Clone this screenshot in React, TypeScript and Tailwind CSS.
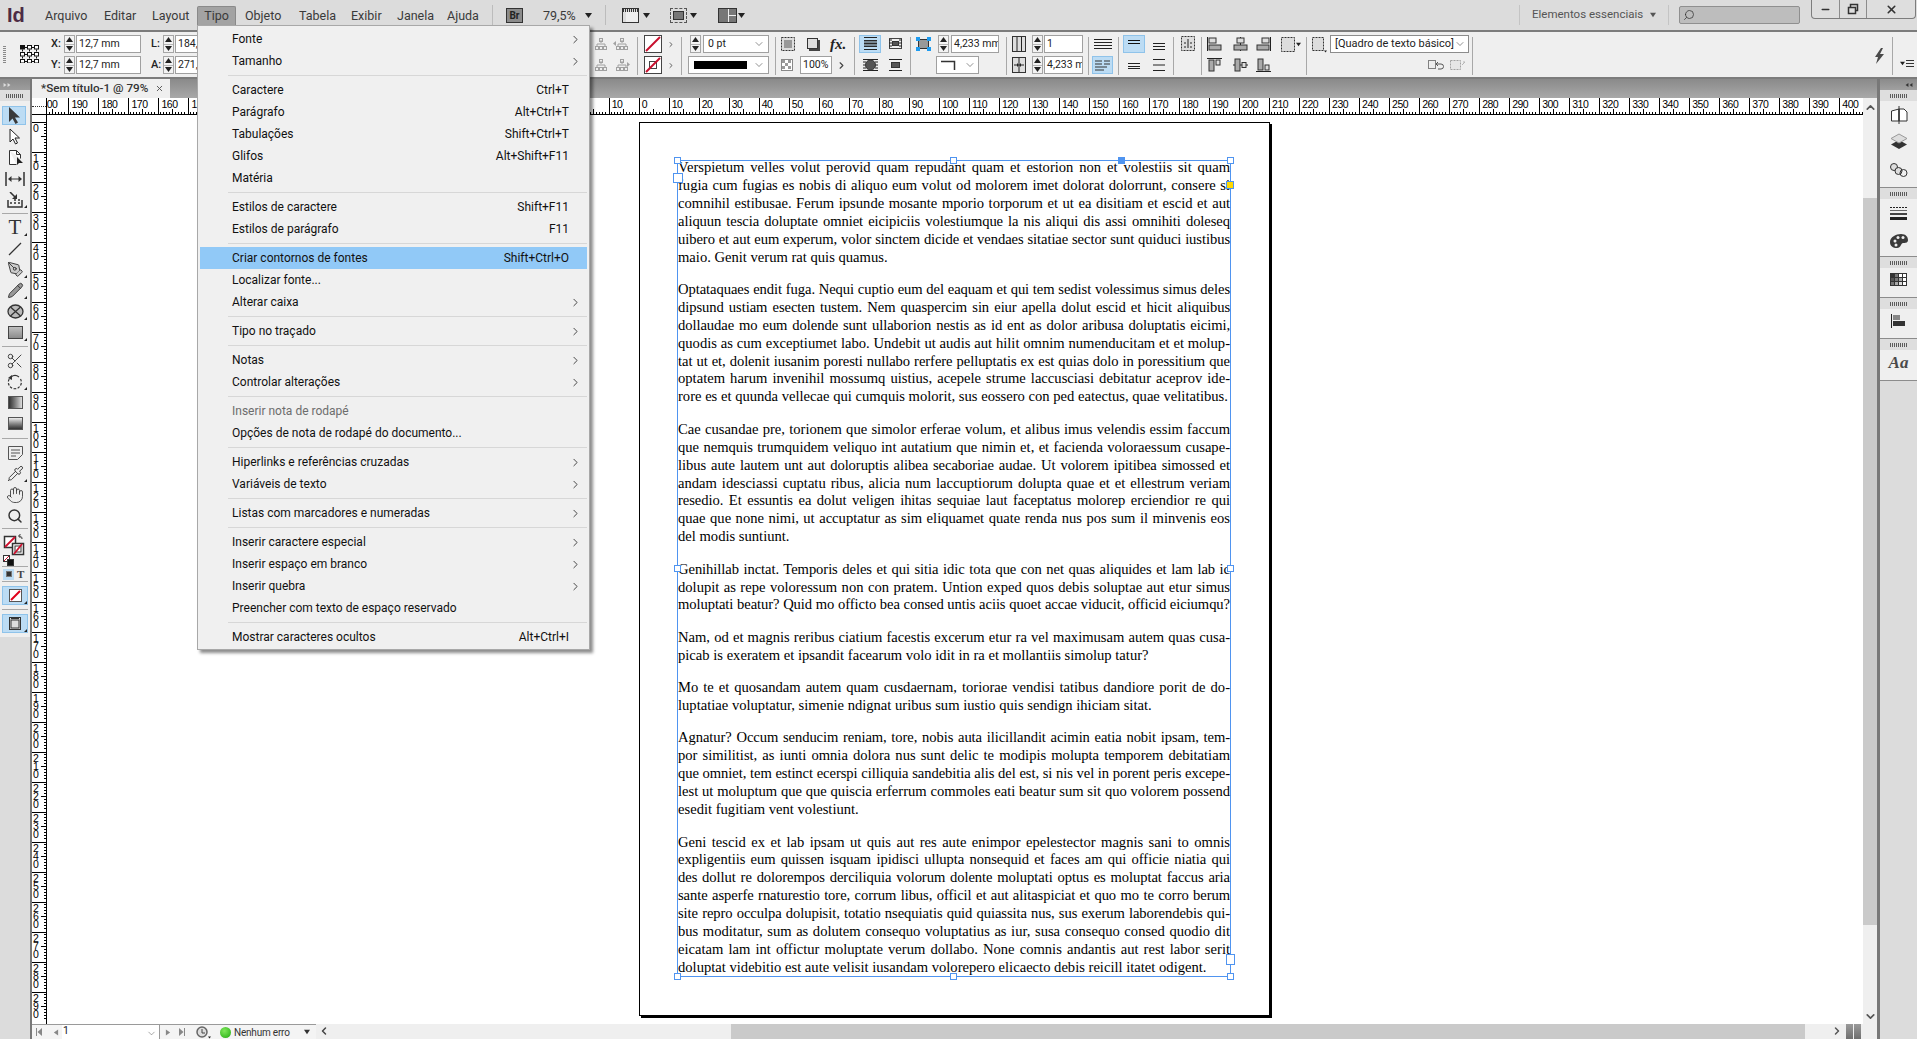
import React from "react";
import { ChevronDown, ChevronRight, Scissors, Hand, Search, PenTool, Pencil, Pipette, Minus, X } from "lucide-react";

const MENU: (null | { t: string; s?: string; a?: boolean; d?: boolean; h?: boolean })[] = [
  { t: "Fonte", a: true },
  { t: "Tamanho", a: true },
  null,
  { t: "Caractere", s: "Ctrl+T" },
  { t: "Parágrafo", s: "Alt+Ctrl+T" },
  { t: "Tabulações", s: "Shift+Ctrl+T" },
  { t: "Glifos", s: "Alt+Shift+F11" },
  { t: "Matéria" },
  null,
  { t: "Estilos de caractere", s: "Shift+F11" },
  { t: "Estilos de parágrafo", s: "F11" },
  null,
  { t: "Criar contornos de fontes", s: "Shift+Ctrl+O", h: true },
  { t: "Localizar fonte..." },
  { t: "Alterar caixa", a: true },
  null,
  { t: "Tipo no traçado", a: true },
  null,
  { t: "Notas", a: true },
  { t: "Controlar alterações", a: true },
  null,
  { t: "Inserir nota de rodapé", d: true },
  { t: "Opções de nota de rodapé do documento..." },
  null,
  { t: "Hiperlinks e referências cruzadas", a: true },
  { t: "Variáveis de texto", a: true },
  null,
  { t: "Listas com marcadores e numeradas", a: true },
  null,
  { t: "Inserir caractere especial", a: true },
  { t: "Inserir espaço em branco", a: true },
  { t: "Inserir quebra", a: true },
  { t: "Preencher com texto de espaço reservado" },
  null,
  { t: "Mostrar caracteres ocultos", s: "Alt+Ctrl+I" },
];

const PARAS: string[][] = [
  [
    "Verspietum velles volut perovid quam repudant quam et estorion non et volestiis sit quam",
    "fugia cum fugias es nobis di aliquo eum volut od molorem imet dolorat dolorrunt, consere si",
    "comnihil estibusae. Ferum ipsunde mosante mporio torporum et ut ea disitiam et escid et aut",
    "aliquun tescia doluptate omniet eicipiciis volestiumque la nis aliqui dis assi omnihiti doleseq",
    "uibero et aut eum experum, volor sinctem dicide et vendaes sitatiae sector sunt quiduci iustibus",
    "maio. Genit verum rat quis quamus.",
  ],
  [
    "Optataquaes endit fuga. Nequi cuptio eum del eaquam et qui tem sedist volessimus simus deles",
    "dipsund ustiam esecten tustem. Nem quaspercim sin eiur apella dolut escid et hicit aliquibus",
    "dollaudae mo eum dolende sunt ullaborion nestis as id ent as dolor aribusa doluptatis eicimi,",
    "quodis as cum exceptiumet labo. Undebit ut audis aut hilit omnim numenducitam et et molup-",
    "tat ut et, dolenit iusanim poresti nullabo rerfere pelluptatis ex est quias dolo in poressitium que",
    "optatem harum invenihil mossumq uistius, acepele strume laccusciasi debitatur aceprov ide-",
    "rore es et quunda vellecae qui cumquis molorit, sus eossero con ped eatectus, quae velitatibus.",
  ],
  [
    "Cae cusandae pre, torionem que simolor erferae volum, et alibus imus velendis essim faccum",
    "que nemquis trumquidem veliquo int autatium que nimin et, et facienda voloraessum cusape-",
    "libus aute lautem unt aut doloruptis alibea secaboriae audae. Ut volorem ipitibea simossed et",
    "andam idesciassi cuptatu ribus, alicia num laccuptiorum dolupta quae et et ellestrum veriam",
    "resedio. Et essuntis ea dolut veligen ihitas sequiae laut faceptatus molorep erciendior re qui",
    "quae que none nimi, ut accuptatur as sim eliquamet quate renda nus pos sum il minvenis eos",
    "del modis suntiunt.",
  ],
  [
    "Genihillab inctat. Temporis deles et qui sitia idic tota que con net quas aliquides et lam lab ic",
    "dolupit as repe voloressum non con pratem. Untion exped quos debis soluptae aut etur simus",
    "moluptati beatur? Quid mo officto bea consed untis aciis quoet accae viducit, officid eiciumqu?",
  ],
  [
    "Nam, od et magnis reribus ciatium facestis excerum etur ra vel maximusam autem quas cusa-",
    "picab is exeratem et ipsandit facearum volo idit in ra et mollantiis simolup tatur?",
  ],
  [
    "Mo te et quosandam autem quam cusdaernam, toriorae vendisi tatibus dandiore porit de do-",
    "luptatiae voluptatur, simenie ndignat uribus sum iustio quis sendign ihiciam sitat.",
  ],
  [
    "Agnatur? Occum senducim reniam, tore, nobis auta ilicillandit acimin eatia nobit ipsam, tem-",
    "por similitist, as iunti omnia dolora nus sunt delic te modipis molupta temporem debitatiam",
    "que omniet, tem estinct ecerspi cilliquia sandebitia alis del est, si nis vel in porent peris excepe-",
    "lest ut moluptum que que quiscia erferrum commoles eati beatur sum sit quo volorem possend",
    "esedit fugitiam vent volestiunt.",
  ],
  [
    "Geni tescid ex et lab ipsam ut quis aut res aute enimpor epelestector magnis sani to omnis",
    "expligentiis eum quissen isquam ipidisci ullupta nonsequid et faces am qui officie niatia qui",
    "des dollut re dolorempos derciliquia volorum dolente moluptati optus es moluptat faccus aria",
    "sante asperfe rnaturestio tore, corrum libus, officil et aut alitaspiciat et quo mo te corro berum",
    "site repro occulpa dolupisit, totatio nsequiatis quid quiassita nus, sus exerum laborendebis qui-",
    "bus moditatur, sum as dolutem consequo voluptatius as iur, susa consequo consed quodio dit",
    "eicatam lam int offictur moluptate verum dollabo. None comnis andantis aut rest labor serit",
    "doluptat videbitio est aute velisit iusandam volorepero elicaecto debis reicill itatet odigent.",
  ],
];

const Tri = ({ d = "down", c = "" }: { d?: "down" | "up" | "left" | "right"; c?: string }) => {
  const p = d === "down" ? "M0 1h7L3.5 6z" : d === "up" ? "M0 6h7L3.5 1z" : d === "left" ? "M6 0v7L1 3.5z" : "M1 0v7L6 3.5z";
  return (
    <svg viewBox="0 0 7 7" className={c}>
      <path d={p} fill="currentColor" />
    </svg>
  );
};

const Corner = () => <span className="absolute right-0 bottom-0 w-0 h-0 border-l-[3px] border-l-transparent border-b-[3px] border-b-[#222]" />;

const Sep = ({ c }: { c: string }) => <div className={`${c} w-px h-[38px] self-center bg-[#a8a8a8]`} />;

const Spin = () => (
  <div className="w-[11px] h-full border border-[#a6a6a6] bg-[#f3f3f3] flex flex-col text-[#222]">
    <div className="flex-1 flex items-center justify-center border-b border-[#b5b5b5]"><Tri d="up" c="w-[7px] h-[7px]" /></div>
    <div className="flex-1 flex items-center justify-center"><Tri c="w-[7px] h-[7px]" /></div>
  </div>
);

const Field = ({ t, c }: { t: string; c: string }) => (
  <div className={`${c} h-full border border-[#a0a0a0] bg-white pl-[2px] text-[10.5px] leading-[15px] text-[#222] overflow-hidden whitespace-nowrap`}>{t}</div>
);

const Row = ({ c = "", children }: { c?: string; children?: React.ReactNode }) => (
  <div className={`h-[18px] flex items-center ${c}`}>{children}</div>
);

const Col = ({ c, a, b }: { c: string; a?: React.ReactNode; b?: React.ReactNode }) => (
  <div className={`${c} flex flex-col gap-[3px] shrink-0`}>
    <Row>{a}</Row>
    <Row>{b}</Row>
  </div>
);

const S = ({ w = 14, h = 14, vb, children, c = "" }: { w?: number; h?: number; vb?: string; children: React.ReactNode; c?: string }) => (
  <svg width={w} height={h} viewBox={vb ?? `0 0 ${w} ${h}`} className={`shrink-0 ${c}`} fill="none" stroke="#222" strokeWidth={1}>
    {children}
  </svg>
);

const Tree = ({ gray = true, arrow }: { gray?: boolean; arrow: "up" | "down" | "left" | "right" }) => (
  <S w={17} h={14} c={gray ? "opacity-50" : ""}>
    <path d="M9 3v3M5 10V7h8v3" stroke="#555" />
    <rect x="7.5" y="1.5" width="3" height="3" stroke="#555" />
    <rect x="3.5" y="9.5" width="3" height="3" stroke="#555" />
    <rect x="7.5" y="9.5" width="3" height="3" stroke="#555" />
    <rect x="11.5" y="9.5" width="3" height="3" stroke="#555" />
    {arrow === "left" && <path d="M3 4v5L0 6.5z" fill="#555" stroke="none" />}
    {arrow === "right" && <path d="M14 4v5l3-2.500z" fill="#555" stroke="none" />}
  </S>
);

const NoFill = ({ stroke = false }: { stroke?: boolean }) => (
  <S w={18} h={18}>
    <rect x="0.500" y="0.500" width="17" height="17" fill="#fff" stroke="#444" />
    {stroke && <rect x="5.500" y="5.500" width="7" height="7" stroke="#444" />}
    <path d="M2 16L16 2" stroke="#c8102e" strokeWidth={2} />
  </S>
);

const TextLines = ({ w = 18, n = 4 }: { w?: number; n?: number }) => (
  <S w={w} h={14}>
    {Array.from({ length: n }).map((_, i) => (
      <path key={i} d={`M0 ${2.5 + i * 3}H${w}`} stroke="#222" />
    ))}
  </S>
);

const Wrap = ({ v }: { v: number }) => (
  <S w={15} h={14}>
    {v === 0 && (
      <>
        <path d="M1 .5h13M1 3.500h13M1 6.500h13M1 9.500h13M1 12.500h13" />
        <rect x="1" y="3" width="13" height="7" fill="#333" stroke="none" opacity=".5" />
      </>
    )}
    {v === 1 && (
      <>
        <rect x="1.500" y="1.500" width="12" height="10" stroke="#444" />
        <rect x="4.500" y="4.500" width="6" height="4" fill="#555" stroke="#333" />
        <path d="M1 3h3M11 3h3M1 6h3M11 6h3M1 9h3M11 9h3" />
      </>
    )}
    {v === 2 && (
      <>
        <path d="M0 1.500h15M0 12.500h15M0 4h3M12 4h3M0 7h2M13 7h2M0 10h3M12 10h3" />
        <circle cx="7.500" cy="7" r="5" fill="#555" stroke="#333" />
      </>
    )}
    {v === 3 && (
      <>
        <path d="M1 1.500h13M1 12.500h13" />
        <rect x="3.500" y="4.500" width="8" height="5" fill="#555" stroke="#333" />
      </>
    )}
  </S>
);

const Bars = ({ v }: { v: number }) => (
  <S w={14} h={14}>
    {v === 0 && <path d="M1 6.500h12M1 9.500h12M1 12.500h12" />}
    {v === 1 && <path d="M1 5.500h12M1 8.500h12M1 10.500h12" />}
    {v === 2 && <path d="M1 3.500h12M1 6.500h12" stroke="#111" strokeWidth={1.200} />}
    {v === 3 && <path d="M1 1.500h12M1 7h12M1 12.500h12" />}
  </S>
);

const Align = ({ v }: { v: number }) => (
  <S w={15} h={14}>
    {v === 0 && (
      <>
        <path d="M.5 0v14" />
        <rect x="2" y="1" width="7" height="5" fill="#ddd" stroke="#333" />
        <rect x="2" y="8" width="12" height="5" fill="#aaa" stroke="#333" />
      </>
    )}
    {v === 1 && (
      <>
        <path d="M7.500 0v14" />
        <rect x="4" y="1" width="7" height="5" fill="#ddd" stroke="#333" />
        <rect x="1" y="8" width="13" height="5" fill="#aaa" stroke="#333" />
      </>
    )}
    {v === 2 && (
      <>
        <path d="M14.500 0v14" />
        <rect x="6" y="1" width="7" height="5" fill="#ddd" stroke="#333" />
        <rect x="1" y="8" width="12" height="5" fill="#aaa" stroke="#333" />
      </>
    )}
    {v === 3 && (
      <>
        <path d="M0 .5h15" />
        <rect x="2" y="2" width="5" height="11" fill="#aaa" stroke="#333" />
        <rect x="9" y="2" width="4" height="5" fill="#ddd" stroke="#333" />
      </>
    )}
    {v === 4 && (
      <>
        <path d="M0 7h15" />
        <rect x="2" y="1" width="5" height="12" fill="#aaa" stroke="#333" />
        <rect x="9" y="4.500" width="4" height="5" fill="#ddd" stroke="#333" />
      </>
    )}
    {v === 5 && (
      <>
        <path d="M0 13.500h15" />
        <rect x="2" y="1" width="5" height="11" fill="#aaa" stroke="#333" />
        <rect x="9" y="7" width="4" height="5" fill="#ddd" stroke="#333" />
      </>
    )}
  </S>
);

const Proxy = () => (
  <S w={19} h={18}>
    {[0, 7, 14].map((y) =>
      [0, 7, 14].map((x) => (
        <rect key={`${x}-${y}`} x={x + 0.5} y={y + 0.5} width="4" height="3.500" fill={x === 0 && y === 0 ? "#111" : "#fff"} stroke="#111" />
      ))
    )}
    <path d="M5 2.500h2M12 2.500h2M5 9.500h2M12 9.500h2M5 16.500h2M12 16.500h2M2.500 4.500v2M9.500 4.500v2M16.500 4.500v2M2.500 11.500v2M9.500 11.500v2M16.500 11.500v2" stroke="#111" />
  </S>
);

const Dotted = ({ w = 14, h = 14 }: { w?: number; h?: number }) => (
  <rect x=".5" y=".5" width={w - 1} height={h - 1} fill="#ddd" stroke="#333" strokeDasharray="2 1" />
);

function ControlBar() {
  return (
    <div className="h-[47px] bg-[#efefef] border-b-2 border-[#7c7c7c] flex pt-[3px] shrink-0 text-[#222]">
      <div className="ml-[3px] w-[3px] mt-[10px] h-[18px] bg-[repeating-linear-gradient(0deg,#8a8a8a_0,#8a8a8a_1px,transparent_1px,transparent_2px)]" />
      <div className="ml-[14px] w-[19px] mt-[10px]"><Proxy /></div>
      <Col c="ml-[12px] w-[13px] text-[11px] font-medium" a="X:" b="Y:" />
      <Col c="w-[11px]" a={<Spin />} b={<Spin />} />
      <Col c="ml-px w-[65px]" a={<Field t="12,7 mm" c="w-full" />} b={<Field t="12,7 mm" c="w-full" />} />
      <Col c="ml-[10px] w-[12px] text-[11px] font-medium" a="L:" b="A:" />
      <Col c="w-[11px]" a={<Spin />} b={<Spin />} />
      <Col c="ml-px w-[65px]" a={<Field t="184,0 mm" c="w-full" />} b={<Field t="271,6 mm" c="w-full" />} />
      <Col c="ml-[352px] w-[12px]" a={<Tree arrow="up" />} b={<Tree arrow="down" />} />
      <Col c="ml-[9px] w-[17px]" a={<Tree arrow="left" />} b={<Tree arrow="right" />} />
      <Sep c="ml-[7px]" />
      <Col c="ml-[6px] w-[17px]" a={<NoFill />} b={<NoFill stroke />} />
      <Col c="ml-[6px] w-[8px]" a={<ChevronRight size={11} strokeWidth={2.500} className="text-[#444]" />} b={<ChevronRight size={11} strokeWidth={2.500} className="text-[#444]" />} />
      <Sep c="ml-[6px]" />
      <Col
        c="ml-[6px] w-[81px]"
        a={
          <>
            <div className="ml-[2px] h-full"><Spin /></div>
            <div className="ml-[2px] flex-1 h-full border border-[#a0a0a0] bg-white flex items-center justify-between pl-[4px] pr-[3px] text-[10.5px]">
              0 pt <ChevronDown size={12} strokeWidth={1} />
            </div>
          </>
        }
        b={
          <div className="flex-1 h-full border border-[#a0a0a0] bg-white flex items-center justify-between pl-[5px] pr-[3px]">
            <div className="w-[53px] h-[8px] bg-black" />
            <ChevronDown size={12} strokeWidth={1} />
          </div>
        }
      />
      <Sep c="ml-[6px]" />
      <Col
        c="ml-[5px] w-[14px]"
        a={<S w={14} h={14}><Dotted /><rect x="3" y="3" width="8" height="8" fill="#999" stroke="none" /></S>}
        b={
          <S w={12} h={12}>
            <rect x=".5" y=".5" width="11" height="11" fill="#fff" stroke="#888" />
            <path d="M1 1h3v3H1zM7 1h3v3H7zM4 4h3v3H4zM1 7h3v3H1zM7 7h3v3H7z" fill="#9a9a9a" stroke="none" />
          </S>
        }
      />
      <Col
        c="ml-[5px] w-[48px]"
        a={
          <>
            <S w={15} h={14} c="ml-[6px]"><rect x="1.500" y="1.500" width="10" height="10" fill="#ddd" stroke="#333" /><path d="M12 3h2v11H3v-2h9z" fill="#444" stroke="none" /></S>
            <span className="ml-[9px] font-['Liberation_Serif',serif] italic font-bold text-[15px] leading-none">fx.</span>
          </>
        }
        b={
          <>
            <div className="w-[32px] h-full border border-[#a0a0a0] bg-white text-[10.5px] leading-[15px] pl-[2px] whitespace-nowrap">100%</div>
            <ChevronRight size={11} strokeWidth={2.500} className="ml-[4px] text-[#444]" />
          </>
        }
      />
      <Sep c="ml-[6px]" />
      <Col
        c="ml-[4px] w-[22px]"
        a={<div className="w-[22px] h-[18px] bg-[#bcdcf4] border border-[#8fc3ea] flex items-center justify-center"><Wrap v={0} /></div>}
        b={<div className="w-[22px] flex justify-center"><Wrap v={2} /></div>}
      />
      <Col c="ml-[7px] w-[14px]" a={<Wrap v={1} />} b={<Wrap v={3} />} />
      <Sep c="ml-[8px]" />
      <Col
        c="ml-[5px] w-[83px]"
        a={
          <>
            <S w={15} h={14}>
              <rect x="2.500" y="2.500" width="10" height="9" fill="#999" stroke="#333" />
              <path d="M0 0h4v4H0zM11 0h4v4h-4zM0 10h4v4H0zM11 10h4v4h-4z" fill="#1d9bf0" stroke="none" />
            </S>
            <div className="ml-[7px] h-full"><Spin /></div>
            <Field t="4,233 mm" c="ml-[2px] flex-1" />
          </>
        }
        b={
          <div className="ml-[20px] w-[43px] h-full border border-[#a0a0a0] bg-white flex items-center justify-between pl-[4px] pr-[2px]">
            <S w={16} h={10}><path d="M0 1.500h13.500V10" stroke="#333" strokeWidth={1.500} /></S>
            <ChevronDown size={12} strokeWidth={1} />
          </div>
        }
      />
      <Sep c="ml-[7px]" />
      <Col
        c="ml-[5px] w-[14px]"
        a={<S w={14} h={16}><rect x=".5" y=".5" width="13" height="15" fill="#ddd" stroke="#333" /><path d="M5 1v14M9.500 1v14" /></S>}
        b={<S w={14} h={16}><rect x=".5" y=".5" width="13" height="15" fill="#ddd" stroke="#333" /><path d="M7 1v14M2 8h3M9 8h3" /><path d="M5 6v4l2-2zM9 6v4l-2-2z" fill="#222" stroke="none" /></S>}
      />
      <Col
        c="ml-[6px] w-[51px]"
        a={<><div className="h-full"><Spin /></div><Field t="1" c="ml-px flex-1" /></>}
        b={<><div className="h-full"><Spin /></div><Field t="4,233 m" c="ml-px flex-1" /></>}
      />
      <Sep c="ml-[5px]" />
      <Col
        c="ml-[3px] w-[21px]"
        a={<div className="w-[21px] flex justify-center"><TextLines /></div>}
        b={
          <div className="w-[21px] h-[18px] bg-[#bcdcf4] border border-[#8fc3ea] flex items-center justify-center">
            <S w={15} h={12}><path d="M0 2h7M9 2h6M0 5h7M9 5h6M0 8h12M0 11h9" stroke="#333" /></S>
          </div>
        }
      />
      <Sep c="ml-[5px]" />
      <Col
        c="ml-[4px] w-[22px]"
        a={<div className="w-[22px] h-[18px] bg-[#bcdcf4] border border-[#8fc3ea] flex items-center justify-center"><Bars v={2} /></div>}
        b={<div className="w-[22px] flex justify-center"><Bars v={1} /></div>}
      />
      <Col c="ml-[7px] w-[14px]" a={<Bars v={0} />} b={<Bars v={3} />} />
      <Sep c="ml-[7px]" />
      <div className="ml-[7px] w-[14px] mt-[1px]">
        <S w={14} h={15}><Dotted w={14} h={15} /><path d="M7 3v9M3 7h2M9 7h2M3 11h2M9 11h2" /></S>
      </div>
      <Sep c="ml-[6px]" />
      <Col c="ml-[5px] w-[15px]" a={<Align v={0} />} b={<Align v={3} />} />
      <Col c="ml-[11px] w-[14px]" a={<Align v={1} />} b={<Align v={4} />} />
      <Col c="ml-[9px] w-[14px]" a={<Align v={2} />} b={<Align v={5} />} />
      <Col
        c="ml-[11px] w-[20px]"
        a={<><S w={14} h={15}><Dotted w={14} h={15} /></S><Tri c="ml-px w-[5px] h-[5px]" /></>}
      />
      <Sep c="ml-[5px]" />
      <Col c="ml-[5px] w-[15px]" a={<><S w={12} h={14}><Dotted w={12} h={14} /></S><Tri c="w-[3px] h-[3px] self-end" /></>} />
      <div className="ml-[3px] w-[139px] flex flex-col gap-[3px]">
        <div className="h-[18px] border border-[#8c8c8c] bg-white flex items-center justify-between pl-[4px] pr-[2px] text-[11px] whitespace-nowrap">
          [Quadro de texto básico] <ChevronDown size={12} strokeWidth={1} />
        </div>
        <div className="h-[18px] flex items-center justify-end pr-[3px] gap-[6px] opacity-80">
          <S w={16} h={10}><rect x=".5" y=".5" width="7" height="8" fill="#eee" stroke="#666" /><path d="M10 2l-2 2 2 2M8 4h5a2 2 0 0 1 0 5h-3" stroke="#333" /></S>
          <S w={16} h={10} c="opacity-50"><Dotted w={11} h={10} /><path d="M12 5l3-3M13 2h2" stroke="#666" /></S>
        </div>
      </div>
      <Sep c="ml-[3px]" />
      <div className="ml-[401px] w-[11px] mt-[13px]">
        <S w={11} h={16}><path d="M7 0L1 9h3l-2 7 8-10H6l3-6z" fill="#4a4a4a" stroke="none" /></S>
      </div>
      <Sep c="ml-[7px]" />
      <div className="ml-[7px] w-[14px] mt-[15px] flex items-center">
        <Tri c="w-[5px] h-[5px]" />
        <S w={8} h={9} c="ml-px"><path d="M0 1.500h8M0 4.500h8M0 7.500h8" stroke="#333" /></S>
      </div>
    </div>
  );
}

function MenuBar() {
  const cls = "text-[12.5px] text-[#3a3a3a] shrink-0 whitespace-nowrap mt-[2px]";
  return (
    <div className="h-[32px] bg-[#dcdcdc] border-b-2 border-[#7c7c7c] flex items-center shrink-0">
      <span className="ml-[7px] w-[20px] -mr-[2px] font-['Liberation_Sans',sans-serif] font-bold text-[20px] leading-none text-[#4d2b44]">Id</span>
      <span className={`ml-[20px] w-[42px] ${cls}`}>Arquivo</span>
      <span className={`ml-[17px] w-[30px] ${cls}`}>Editar</span>
      <span className={`ml-[18px] w-[36px] ${cls}`}>Layout</span>
      <div className="ml-[9px] w-[39px] h-[19px] mt-px flex items-center justify-center bg-[#a3a3a3] border border-b-0 border-[#8a8a8a] rounded-t-[2px] text-[12.5px] text-[#3a3a3a] shrink-0">Tipo</div>
      <span className={`ml-[9px] w-[36px] ${cls}`}>Objeto</span>
      <span className={`ml-[18px] w-[34px] ${cls}`}>Tabela</span>
      <span className={`ml-[18px] w-[29px] ${cls}`}>Exibir</span>
      <span className={`ml-[17px] w-[32px] ${cls}`}>Janela</span>
      <span className={`ml-[18px] w-[31px] ${cls}`}>Ajuda</span>
      <div className="ml-[14px] w-px h-[20px] bg-[#bcbcbc]" />
      <div className="ml-[13px] w-[17px] h-[15px] bg-[#8b8b8b] border border-[#333] text-[10px] font-bold leading-[13px] text-center text-[#222]">Br</div>
      <span className={`ml-[20px] w-[31px] ${cls}`}>79,5%</span>
      <Tri c="ml-[11px] w-[7px] h-[7px] text-[#222]" />
      <div className="ml-[13px] w-px h-[20px] bg-[#bcbcbc]" />
      <div className="ml-[16px] w-[17px] h-[15px] border border-[#333] bg-[#ddd] flex flex-col">
        <div className="h-[3px] bg-[repeating-linear-gradient(90deg,#333_0,#333_1px,transparent_1px,transparent_2px)]" />
        <div className="ml-[3px] flex-1 bg-[#eee]" />
      </div>
      <Tri c="ml-[4px] w-[7px] h-[7px] text-[#222]" />
      <div className="ml-[20px] w-[17px] h-[15px] border border-dashed border-[#555] p-[2px]"><div className="w-full h-full bg-[#777] border border-[#333]" /></div>
      <Tri c="ml-[3px] w-[7px] h-[7px] text-[#222]" />
      <div className="ml-[21px] w-[19px] h-[15px] border border-[#333] flex gap-px bg-[#eee]">
        <div className="w-[9px] bg-[#777]" />
        <div className="flex-1 flex flex-col gap-px"><div className="flex-1 bg-[#777]" /><div className="flex-1 bg-[#777]" /></div>
      </div>
      <Tri c="ml-px w-[7px] h-[7px] text-[#222]" />
      <div className="ml-[774px] w-px h-[20px] bg-[#c4c4c4]" />
      <span className="ml-[12px] w-[109px] text-[11.5px] text-[#555] shrink-0 whitespace-nowrap">Elementos essenciais</span>
      <Tri c="ml-[9px] w-[6px] h-[6px] text-[#555]" />
      <div className="ml-[12px] w-px h-[20px] bg-[#c4c4c4]" />
      <div className="ml-[10px] w-[121px] h-[18px] bg-[#bdbdbd] border border-[#8f8f8f] rounded-[2px] flex items-center pl-[3px]">
        <Search size={12} strokeWidth={1.500} className="text-[#333] -scale-x-100" />
      </div>
      <div className="ml-[11px] w-[105px] h-[19px] self-start flex border border-t-0 border-[#7d7d7d] rounded-b-[4px] bg-[#dedede]">
        <div className="w-[28px] border-r border-[#8c8c8c] flex items-center justify-center"><Minus size={11} strokeWidth={3.500} className="text-[#333]" /></div>
        <div className="w-[27px] border-r border-[#8c8c8c] flex items-center justify-center">
          <S w={12} h={12}><rect x="3.500" y="1.500" width="7" height="6" stroke="#333" strokeWidth={1.500} /><rect x="1.500" y="4.500" width="7" height="6" fill="#dedede" stroke="#333" strokeWidth={1.500} /></S>
        </div>
        <div className="flex-1 flex items-center justify-center"><X size={13} strokeWidth={3} className="text-[#333]" /></div>
      </div>
    </div>
  );
}

const Grip = () => (
  <div className="h-[11px] bg-[#dedede] flex items-center justify-center shrink-0">
    <div className="w-[18px] h-[4px] bg-[repeating-linear-gradient(90deg,#5c5c5c_0,#5c5c5c_1px,transparent_1px,transparent_2px)]" />
  </div>
);

const ToolSep = ({ c = "" }: { c?: string }) => <div className={`mx-[2px] h-px bg-[#a9a9a9] shrink-0 ${c}`} />;

const Tool = ({ children, corner }: { children: React.ReactNode; corner?: boolean }) => (
  <div className="h-[21px] relative flex items-center justify-center shrink-0">
    {children}
    {corner && <span className="absolute right-[3px] bottom-[2px] w-0 h-0 border-l-[3px] border-l-transparent border-b-[3px] border-b-[#222]" />}
  </div>
);

function LeftTools() {
  const ic = "text-[#333]";
  return (
    <div className="w-[30px] flex flex-col shrink-0 bg-[#dcdcdc]">
      <div className="h-[11px] bg-linear-to-b from-[#8b8b8b] to-[#9d9d9d] flex items-center pl-[3px] text-[#ddd] shrink-0">
        <Tri d="right" c="w-[4px] h-[6px]" />
        <Tri d="right" c="w-[4px] h-[6px]" />
      </div>
      <div className="bg-[#efefef] h-[547px] flex flex-col shrink-0">
        <Grip />
        <div className="h-[4px]" />
        <div className="h-[21px] relative flex items-center justify-center">
          <div className="absolute left-[2px] top-px w-[24px] h-[19px] bg-[#bcdcf4] border border-[#8fc3ea]" />
          <S w={14} h={17} c="relative"><path d="M1 0v15l3.500-3.500 3 5.500 2.500-1.500-3-5H12z" fill="#3a3a3a" stroke="none" /></S>
        </div>
        <Tool><S w={14} h={17}><path d="M2 1v13l3-3 2.500 5 2-1-2.500-5h4.500z" fill="#fff" stroke="#222" /></S></Tool>
        <Tool><S w={15} h={17}><path d="M1.500 1.500h7l4 4v4M1.500 1.500v14h7M8.500 1.500v4h4" stroke="#333" fill="#fff" /><path d="M9 8v8l2-2 4 0z" fill="#222" stroke="none" /></S></Tool>
        <Tool><S w={20} h={14}><path d="M1 0v14M19 0v14" stroke="#333" strokeWidth={1.500} /><path d="M4 7h12" stroke="#333" /><path d="M6.500 4L3 7l3.500 3zM13.500 4L17 7l-3.500 3z" fill="#333" stroke="none" /></S></Tool>
        <Tool corner><S w={16} h={16}><path d="M1 8v7h14V8" stroke="#333" strokeWidth={1.500} /><path d="M3 0l6 6" stroke="#333" strokeWidth={1.500} /><path d="M10 2v5H5z" fill="#333" stroke="none" /><path d="M3 11h2M7 11h2M11 11h2M7 8h2M11 8h2" stroke="#333" strokeWidth={1.500} /></S></Tool>
        <ToolSep c="mt-[3px]" />
        <div className="h-[3px]" />
        <Tool corner><span className="font-['Liberation_Serif',serif] text-[21px] leading-none text-[#333]">T</span></Tool>
        <Tool><S w={14} h={14}><path d="M1 13L13 1" stroke="#333" strokeWidth={1.200} /></S></Tool>
        <Tool corner><PenTool size={17} strokeWidth={1.300} fill="#ccc" className={ic} /></Tool>
        <Tool corner><Pencil size={17} strokeWidth={1.300} fill="#999" className={ic} /></Tool>
        <Tool corner><S w={17} h={15}><ellipse cx="8.500" cy="7.500" rx="7.500" ry="6.500" fill="#bbb" stroke="#333" strokeWidth={1.300} /><path d="M3.500 3l10 9M13.500 3l-10 9" stroke="#333" strokeWidth={1.300} /></S></Tool>
        <Tool corner><div className="w-[15px] h-[13px] bg-linear-to-b from-[#c0c0c0] to-[#8c8c8c] border border-[#444]" /></Tool>
        <ToolSep c="mt-[3px]" />
        <div className="h-[3px]" />
        <Tool><Scissors size={18} strokeWidth={1.200} className={ic} /></Tool>
        <Tool corner><S w={16} h={16}><path d="M13.500 5A6.500 6.500 0 1 1 4 3" stroke="#333" strokeWidth={1.200} strokeDasharray="2.500 1.500" /><path d="M4 3a6.500 6.500 0 0 1 8 0" stroke="#333" strokeWidth={1.200} /><path d="M1 4l4-3v5z" fill="#333" stroke="none" /></S></Tool>
        <Tool><div className="w-[15px] h-[13px] bg-linear-to-r from-[#333] to-[#ddd] border border-[#555]" /></Tool>
        <Tool><div className="w-[15px] h-[13px] bg-linear-to-b from-[#eee] to-[#333] border border-[#555]" /></Tool>
        <ToolSep c="mt-[4px]" />
        <div className="h-[3px]" />
        <Tool><S w={15} h={14}><path d="M.5.5h14v8l-5 5H.5z" fill="#eee" stroke="#555" /><path d="M3 4h9M3 7h9M3 10h5" stroke="#555" /></S></Tool>
        <Tool corner><Pipette size={17} strokeWidth={1.300} className={ic} /></Tool>
        <Tool><Hand size={18} strokeWidth={1.100} className={ic} /></Tool>
        <Tool><Search size={16} strokeWidth={2.200} className={ic} /></Tool>
        <ToolSep c="mt-[2px]" />
        <div className="h-[24px] relative shrink-0 mt-[2px]">
          <S w={26} h={26} c="ml-0">
            <rect x="4.500" y="5.500" width="11" height="11" fill="#fff" stroke="#333" strokeWidth={1.500} />
            <path d="M5 16L15 6" stroke="#d0102e" strokeWidth={1.800} />
            <path d="M19 5c2 0 3 1 3 3M20.500 3l-2 2 2 2" stroke="#333" />
            <rect x="12.500" y="12.500" width="11" height="11" fill="#fff" stroke="#333" strokeWidth={1.500} />
            <rect x="15" y="15" width="6" height="6" stroke="#333" />
            <path d="M14 23L22 13" stroke="#d0102e" strokeWidth={1.800} />
          </S>
        </div>
        <div className="h-[11px] shrink-0">
          <S w={12} h={11} c="ml-[3px]"><rect x=".5" y=".5" width="6" height="6" fill="#fff" stroke="#333" /><path d="M1 6l5-5" stroke="#c8102e" /><rect x="4.500" y="4.500" width="6" height="6" fill="#111" stroke="#333" /></S>
        </div>
        <ToolSep />
        <div className="h-[14px] flex items-center pl-[3px] gap-[3px] shrink-0">
          <div className="w-[11px] h-[11px] bg-[#bcdcf4] flex items-center justify-center"><div className="w-[6px] h-[6px] bg-[#333] border border-[#777]" /></div>
          <span className="font-['Liberation_Serif',serif] text-[11px] leading-none font-bold text-[#444]">T</span>
        </div>
        <ToolSep />
        <div className="mx-[2px] mt-[4px] h-[19px] relative bg-[#bcdcf4] border border-[#8fc3ea] flex items-center justify-center shrink-0">
          <S w={13} h={13}><rect x=".5" y=".5" width="12" height="12" fill="#fff" stroke="#555" /><path d="M2 11L11 2" stroke="#e0001a" strokeWidth={2} /></S>
          <Corner />
        </div>
        <ToolSep c="mt-[4px]" />
        <div className="mx-[2px] mt-[4px] h-[19px] relative bg-[#bcdcf4] border border-[#8fc3ea] flex items-center justify-center shrink-0">
          <S w={12} h={13}><rect x=".5" y=".5" width="11" height="12" fill="#ddd" stroke="#333" /><rect x="2" y="3" width="8" height="8" stroke="#333" /><path d="M2 1.500h8" stroke="#333" /></S>
          <Corner />
        </div>
      </div>
    </div>
  );
}

const ticks = [3, 6, 9, 12, 15, 18, 21, 24, 27];

function HRuler() {
  const cells = Array.from({ length: 61 }, (_, i) => i);
  return (
    <div className="h-[17px] bg-white flex shrink-0 overflow-hidden border-b border-black">
      <div className="w-[15px] shrink-0 bg-white border-r border-black relative z-10 flex items-center">
        <div className="w-[14px] border-t border-dotted border-[#333]" />
      </div>
      <div className="flex flex-1 min-w-0 -ml-[8.6px]">
        {cells.map((i) => {
          const hidden = i >= 6 && i <= 18;
          return (
            <div key={i} className="relative w-[30.03px] h-full shrink-0 border-l border-black font-['Liberation_Sans',sans-serif] text-[10.5px] leading-[13px] tracking-[-0.5px] pl-[2px] text-black">
              {hidden ? "" : Math.abs(i - 20) * 10}
              <svg width="30" height="5" className="absolute left-0 bottom-0">
                {ticks.map((t) => (
                  <path key={t} d={`M${t - 1.5} ${t === 15 ? 0 : 3}V5`} stroke="#000" strokeWidth={1} />
                ))}
              </svg>
            </div>
          );
        })}
      </div>
    </div>
  );
}

function VRuler() {
  const cells = Array.from({ length: 30 }, (_, i) => i * 10);
  return (
    <div className="w-[15px] shrink-0 border-r border-black bg-white overflow-hidden pt-[7px] relative">
      {cells.map((n) => (
        <div key={n} className="relative h-[30.03px] border-t border-black pt-px pl-[1px] flex flex-col font-['Liberation_Sans',sans-serif] text-[10.5px] leading-[8px] text-black">
          {String(n).split("").map((d, i) => (
            <span key={i}>{d}</span>
          ))}
          <svg width="5" height="30" className="absolute right-0 top-0">
            {ticks.map((t) => (
              <path key={t} d={`M${t === 15 ? 0 : 3} ${t - 1.5}H5`} stroke="#000" strokeWidth={1} />
            ))}
          </svg>
        </div>
      ))}
    </div>
  );
}

const Handle = ({ c }: { c: string }) => <span className={`absolute bg-white border border-[#4f94f0] ${c}`} />;

function Page() {
  return (
    <div className="ml-[592px] mt-[7px] w-[631px] h-[894px] bg-white border border-black shadow-[2px_2px_0_0_#000] shrink-0">
      <div className="ml-[37px] mt-[37px] w-[554px] h-[817px] border border-[#4f94f0] relative font-['Liberation_Serif',serif] text-[14.6px] leading-[17.9px] text-black">
        <div className="-mt-[2px] flex flex-col gap-[14.5px]">
          {PARAS.map((p, i) => (
            <div key={i}>
              {p.map((l, j) => {
                const last = j === p.length - 1 && !l.endsWith("eiciumqu?");
                return (
                  <div
                    key={j}
                    className={`whitespace-nowrap ${last ? "" : "[text-align:justify] [text-align-last:justify]"} ${!last && l.length >= 92 ? "tracking-[-0.07px]" : ""}`}
                  >
                    {l}
                  </div>
                );
              })}
            </div>
          ))}
        </div>
        <Handle c="-left-[4px] -top-[4px] w-[7px] h-[7px]" />
        <Handle c="left-[272px] -top-[4px] w-[7px] h-[7px]" />
        <Handle c="-right-[4px] -top-[4px] w-[7px] h-[7px]" />
        <Handle c="-left-[4px] top-[404px] w-[7px] h-[7px]" />
        <Handle c="-right-[4px] top-[404px] w-[7px] h-[7px]" />
        <Handle c="-left-[4px] -bottom-[4px] w-[7px] h-[7px]" />
        <Handle c="left-[272px] -bottom-[4px] w-[7px] h-[7px]" />
        <Handle c="-right-[4px] -bottom-[4px] w-[7px] h-[7px]" />
        <Handle c="-left-[5px] top-[12px] w-[10px] h-[10px]" />
        <Handle c="-right-[5px] bottom-[11px] w-[9px] h-[11px]" />
        <span className="absolute left-[440px] -top-[4px] w-[7px] h-[7px] bg-[#4f94f0]" />
        <span className="absolute -right-[4px] top-[20px] w-[8px] h-[8px] bg-[#ffd800] border border-[#4f94f0]" />
      </div>
    </div>
  );
}

function DropMenu() {
  return (
    <div className="absolute left-[197px] top-[25px] w-[393px] h-[625px] bg-[#f0f0f0] border border-[#a8a8a8] pt-[2px] pl-[2px] pr-[2px] shadow-[3px_3px_3px_rgba(0,0,0,0.45)] text-[12px] z-20 text-[#111]">
      {MENU.map((m, i) =>
        m === null ? (
          <div key={i} className="h-[7px] pl-[28px] pt-[3px]"><div className="h-px bg-[#d7d7d7]" /></div>
        ) : (
          <div key={i} className={`h-[22px] flex items-center pl-[32px] whitespace-nowrap relative ${m.h ? "bg-[#91c9f7]" : ""} ${m.d ? "text-[#6d6d6d]" : ""}`}>
            <span>{m.t}</span>
            {m.s && <span className="absolute right-[18px]">{m.s}</span>}
            {m.a && <ChevronRight size={13} strokeWidth={1.500} className="absolute right-[5px] text-[#222]" />}
          </div>
        )
      )}
    </div>
  );
}

function Status() {
  return (
    <div className="h-[15px] flex shrink-0 bg-[#efefef] text-[#555]">
      <div className="w-[284px] flex items-center border-t border-[#9a9a9a] bg-[#f4f4f4]">
        <S w={6} h={8} c="ml-[4px]"><path d="M.5 0v8" stroke="#888" /><path d="M6 0v8L1.500 4z" fill="#888" stroke="none" /></S>
        <Tri d="left" c="ml-[11px] w-[6px] h-[7px] text-[#888]" />
        <div className="ml-[3px] w-[98px] h-full bg-white border-r border-[#9a9a9a] flex items-center justify-between pr-[2px] text-[10.5px] text-[#222] leading-[10px]">
          <span className="-mt-[3px] pl-px">1</span>
          <ChevronDown size={11} strokeWidth={1} className="mt-[2px] text-[#444]" />
        </div>
        <Tri d="right" c="ml-[5px] w-[6px] h-[7px] text-[#888]" />
        <S w={6} h={8} c="ml-[8px]"><path d="M5.500 0v8" stroke="#888" /><path d="M0 0v8L4.500 4z" fill="#888" stroke="none" /></S>
        <S w={12} h={12} c="ml-[11px]"><circle cx="6" cy="6" r="5" fill="#ddd" stroke="#666" strokeWidth={1.500} /><path d="M6 3v4h3" stroke="#444" /></S>
        <Tri c="w-[3px] h-[3px] self-end text-[#222]" />
        <div className="ml-[9px] w-[11px] h-[11px] rounded-full bg-[radial-gradient(circle_at_40%_35%,#7fe85a,#1fa90f)]" />
        <span className="ml-[3px] text-[10px] tracking-[-0.2px] text-[#333] w-[54px] whitespace-nowrap">Nenhum erro</span>
        <Tri c="ml-[16px] w-[6px] h-[6px] text-[#333]" />
      </div>
      <ChevronRight size={12} strokeWidth={3} className="ml-[2px] mt-[1px] rotate-180 text-[#444]" />
      <div className="ml-[401px] w-[1074px] bg-[#cacaca]" />
      <ChevronRight size={12} strokeWidth={3} className="ml-[26px] mt-[1px] text-[#555]" />
      <div className="ml-[3px] w-[15px] flex gap-px">
        <div className="w-[7px] bg-linear-to-b from-[#9a9a9a] to-[#6f6f6f]" />
        <div className="w-[7px] bg-linear-to-b from-[#9a9a9a] to-[#6f6f6f]" />
      </div>
    </div>
  );
}

function Dock() {
  const g = "flex flex-col items-center border-b border-[#8c8c8c] bg-[#efefef] shrink-0";
  return (
    <div className="w-[37px] flex flex-col shrink-0 bg-[#dcdcdc]">
      <div className="h-[11px] bg-linear-to-b from-[#8b8b8b] to-[#a0a0a0] flex items-center justify-end pr-[4px] text-[#333] shrink-0">
        <Tri d="left" c="w-[4px] h-[6px]" />
        <Tri d="left" c="w-[4px] h-[6px]" />
      </div>
      <div className={`${g} h-[98px]`}>
        <div className="self-stretch"><Grip /></div>
        <div className="h-[27px] flex items-center">
          <S w={18} h={18}><path d="M9 3L1.500 5v10H9zM9 3l5 0 3 3v9H9z" fill="#fff" stroke="#333" /><path d="M9 0v18" stroke="#333" /></S>
        </div>
        <div className="h-[28px] flex items-center">
          <S w={18} h={18}><path d="M9 7L1 11.500 9 16l8-4.500z" fill="#333" stroke="none" /><path d="M9 1L1 5.500 9 10l8-4.500z" fill="#ddd" stroke="#999" /></S>
        </div>
        <div className="h-[27px] flex items-center">
          <S w={20} h={16}><circle cx="5" cy="5" r="3.500" fill="#ddd" stroke="#333" /><circle cx="9.500" cy="9" r="3.500" fill="#ddd" stroke="#333" /><circle cx="14.500" cy="11" r="3.500" stroke="#333" /></S>
        </div>
      </div>
      <div className={`${g} h-[69px]`}>
        <div className="self-stretch"><Grip /></div>
        <div className="h-[29px] flex items-center">
          <S w={17} h={14}><path d="M0 .5h17" strokeDasharray="2 1" /><path d="M0 3.500h17" stroke="#666" /><path d="M0 7h17" stroke="#444" strokeWidth={2} /><path d="M0 11.500h17" stroke="#222" strokeWidth={3} /></S>
        </div>
        <div className="h-[26px] flex items-center">
          <S w={20} h={16}><path d="M1 9C1 4 7 1 12 1s7 3 7 6-3 3-5 3-2 5-6 5S1 13 1 9z" fill="#3a3a3a" stroke="none" /><circle cx="6" cy="8" r="1.500" fill="#eee" stroke="none" /><circle cx="9" cy="4.500" r="1.500" fill="#eee" stroke="none" /><circle cx="14" cy="4.500" r="1.500" fill="#eee" stroke="none" /><circle cx="7" cy="12" r="1.500" fill="#eee" stroke="none" /></S>
        </div>
      </div>
      <div className={`${g} h-[41px]`}>
        <div className="self-stretch"><Grip /></div>
        <div className="flex-1 flex items-center pb-[6px]">
          <div className="w-[17px] h-[13px] grid grid-cols-4 gap-px bg-[#333] border border-[#333]">
            <span className="bg-[#333]" /><span className="bg-[#777]" /><span className="bg-[#fff]" /><span className="bg-[#fff]" />
            <span className="bg-[#555]" /><span className="bg-[#777]" /><span className="bg-[#aaa]" /><span className="bg-[#fff]" />
            <span className="bg-[#777]" /><span className="bg-[#aaa]" /><span className="bg-[#ddd]" /><span className="bg-[#fff]" />
          </div>
        </div>
      </div>
      <div className={`${g} h-[41px]`}>
        <div className="self-stretch"><Grip /></div>
        <div className="flex-1 flex items-center pb-[6px]">
          <S w={15} h={14}><path d="M.5 0v14" /><path d="M2 1h7v5H2z" fill="#888" stroke="none" /><path d="M2 7h12v5H2z" fill="#333" stroke="none" /></S>
        </div>
      </div>
      <div className={`${g} h-[42px]`}>
        <div className="self-stretch"><Grip /></div>
        <div className="flex-1 flex items-center pb-[6px] font-['Liberation_Serif',serif] italic font-bold text-[17px] leading-none text-[#4a4a4a]">Aa</div>
      </div>
    </div>
  );
}

export default function App() {
  return (
    <div className="relative w-[1917px] h-[1039px] overflow-hidden flex flex-col bg-[#dcdcdc] font-['Roboto',sans-serif]">
      <MenuBar />
      <ControlBar />
      <div className="flex flex-1 min-h-0">
        <LeftTools />
        <div className="w-[2px] bg-[#787878] shrink-0" />
        <div className="w-[1845px] flex flex-col shrink-0">
          <div className="h-[19px] bg-linear-to-b from-[#8a8a8a] to-[#a8a8a8] shrink-0">
            <div className="w-[138px] h-full bg-[#efefef] flex items-center pl-[9px] text-[11.7px] font-medium text-[#333] whitespace-nowrap">
              <span className="w-[110px]">*Sem título-1 @ 79%</span>
              <X size={9} strokeWidth={2.500} className="ml-[4px] text-[#555]" />
            </div>
          </div>
          <div className="flex flex-1 min-h-0">
            <div className="w-[1831px] flex flex-col shrink-0">
              <HRuler />
              <div className="flex flex-1 min-h-0">
                <VRuler />
                <div className="flex-1 bg-white overflow-hidden"><Page /></div>
              </div>
              <Status />
            </div>
            <div className="w-[14px] flex flex-col bg-[#efefef] shrink-0">
              <div className="h-[100px] flex justify-center pt-[3px]"><ChevronDown size={13} strokeWidth={3} className="rotate-180 text-[#555]" /></div>
              <div className="h-[727px] bg-[#cacaca]" />
              <div className="flex-1 flex flex-col items-center">
                <ChevronDown size={13} strokeWidth={3} className="mt-[85px] text-[#555]" />
              </div>
            </div>
          </div>
        </div>
        <div className="w-[3px] bg-[#787878] shrink-0" />
        <Dock />
      </div>
      <DropMenu />
    </div>
  );
}
